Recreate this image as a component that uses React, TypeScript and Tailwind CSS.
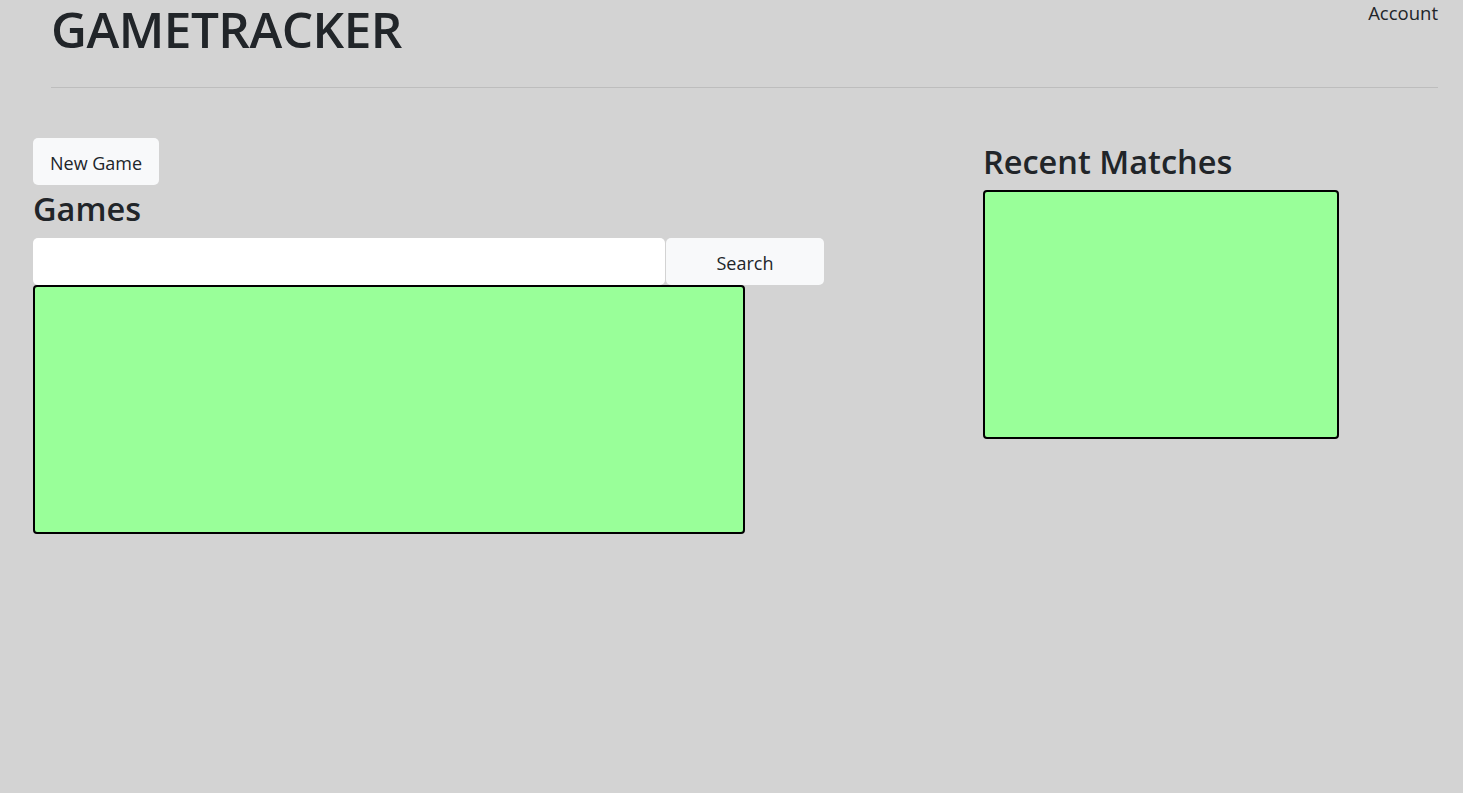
export default function App() {
  return (
    <div
      className="min-h-[793px] bg-[#d3d3d3] text-[#212529]"
      style={{ fontFamily: '"Open Sans", "Noto Sans", sans-serif' }}
    >
      {/* header */}
      <div className="relative pl-[51px] pr-[25px]">
        <h1 className="text-[49.5px] font-semibold leading-[58px] tracking-[-0.5px]">GAMETRACKER</h1>
        <a className="absolute right-[25px] top-0 text-[18.5px] leading-[26px]">Account</a>
        <div className="mt-[29px] h-px bg-[#bdbdbd]" />
      </div>

      <div className="flex pl-[33px] pt-[50px]">
        {/* games */}
        <div className="w-[950px]">
          <button className="h-[47px] rounded-[5px] bg-[#f8f9fa] px-[17px] pt-[3px] text-[18px]">New Game</button>
          <h2 className="mb-[5px] text-[32.5px] font-semibold leading-[48px]">Games</h2>
          <div className="flex">
            <input className="h-[47px] w-[632px] rounded-[5px] bg-white px-3 outline-none" />
            <button className="ml-px h-[47px] w-[158px] rounded-[5px] bg-[#f8f9fa] pt-[3px] text-[18px]">Search</button>
          </div>
          <div className="h-[249px] w-[712px] rounded-[4px] border-2 border-black bg-[#99ff99]" />
        </div>

        {/* recent matches */}
        <div>
          <h2 className="mb-[6px] mt-[2px] text-[32.5px] font-semibold leading-[44px]">Recent Matches</h2>
          <div className="h-[249px] w-[356px] rounded-[4px] border-2 border-black bg-[#99ff99]" />
        </div>
      </div>
    </div>
  );
}
